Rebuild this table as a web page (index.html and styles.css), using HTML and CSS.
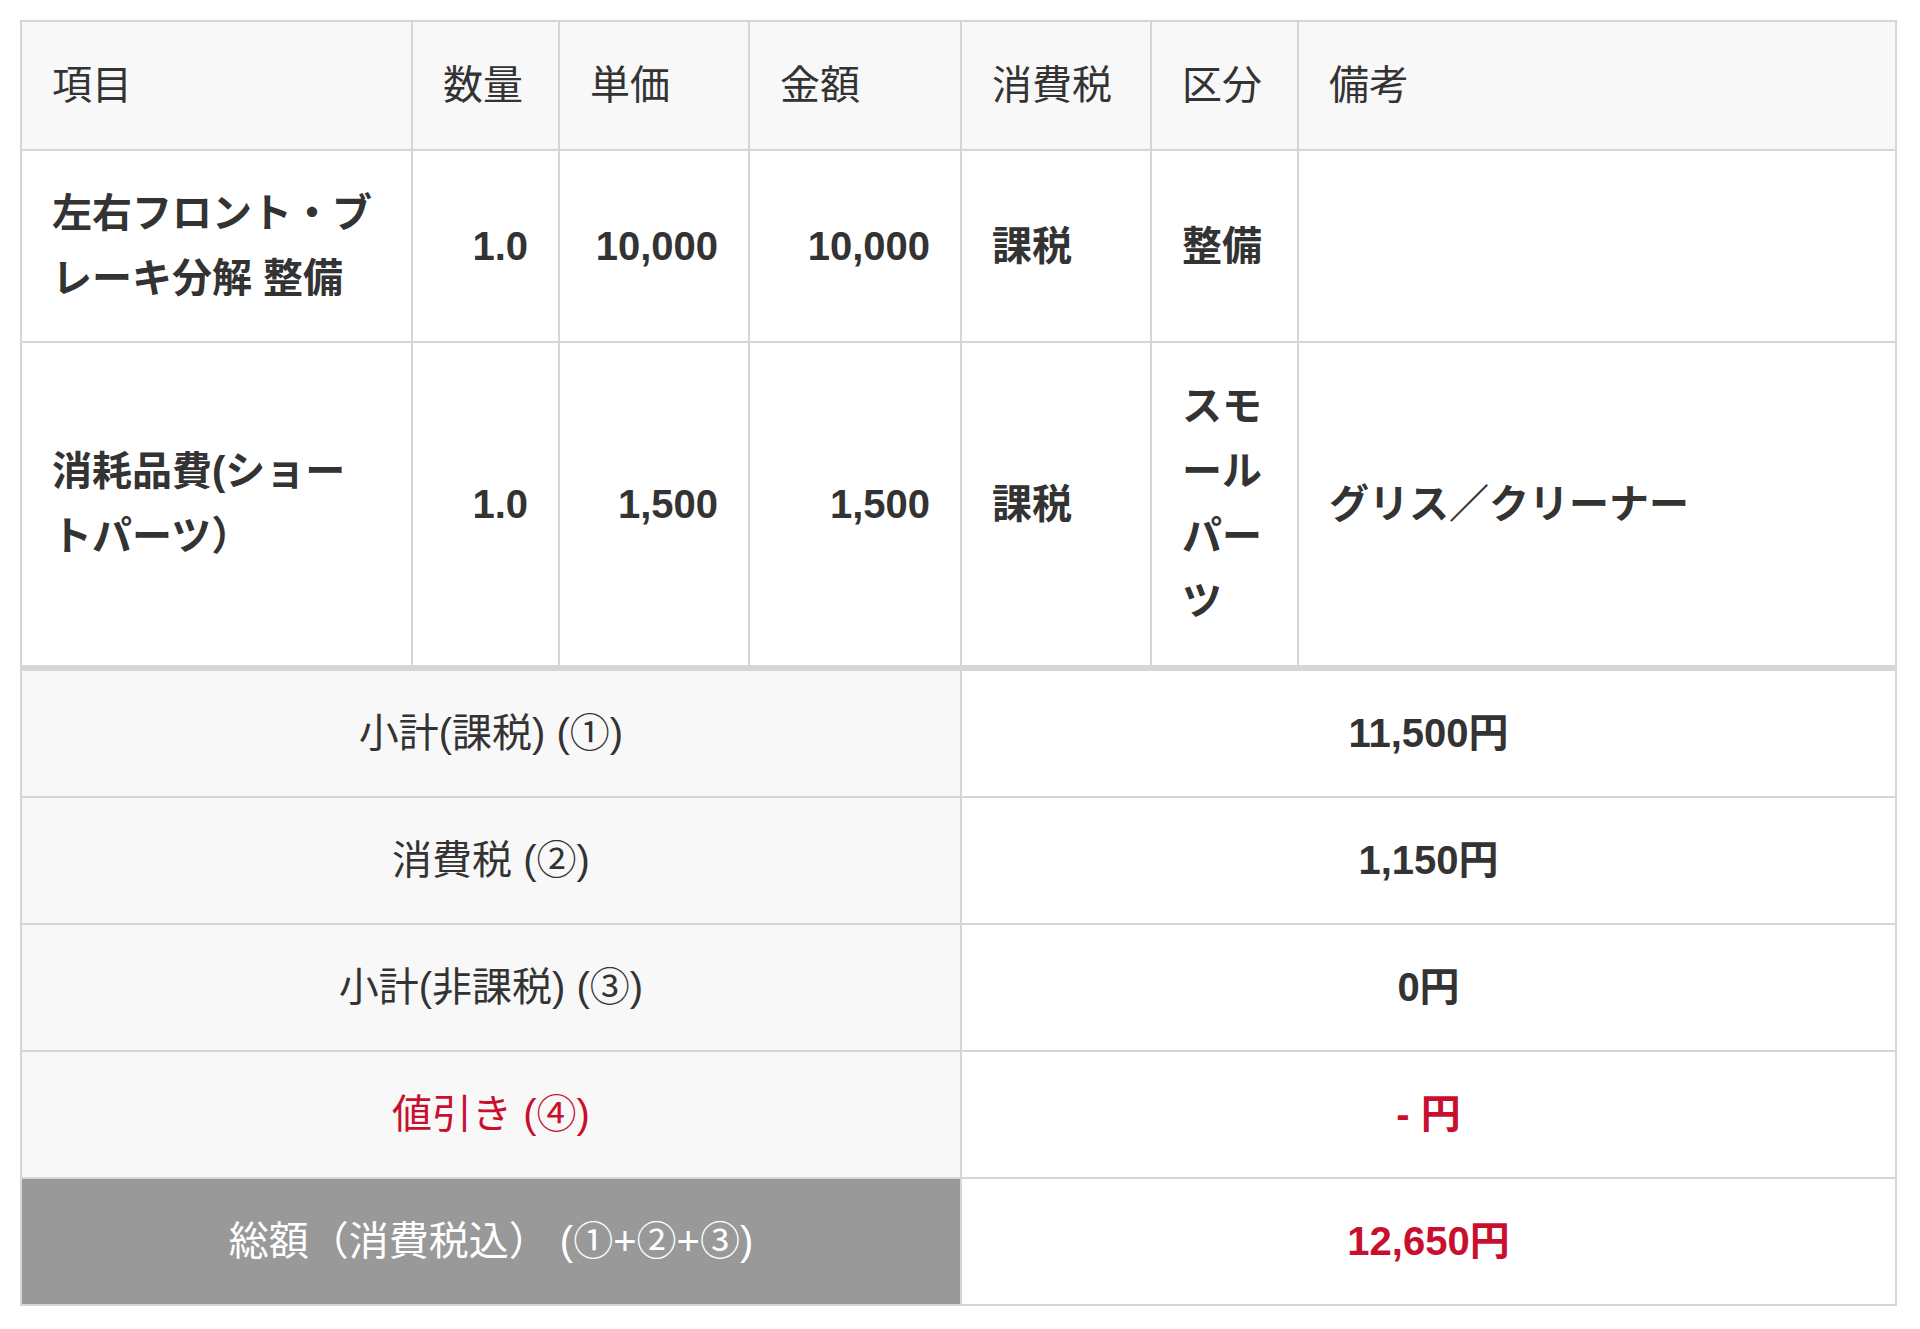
FILE: index.html
```html
<!DOCTYPE html>
<html lang="ja">
<head>
<meta charset="utf-8">
<title>見積明細</title>
<link rel="stylesheet" href="styles.css">
</head>
<body>
<div class="wrap">
  <table class="items">
    <colgroup>
      <col class="c-item"><col class="c-qty"><col class="c-unit"><col class="c-amount"><col class="c-tax"><col class="c-kind"><col class="c-note">
    </colgroup>
    <thead>
      <tr>
        <th>項目</th>
        <th>数量</th>
        <th>単価</th>
        <th>金額</th>
        <th>消費税</th>
        <th>区分</th>
        <th>備考</th>
      </tr>
    </thead>
    <tbody>
      <tr class="row-short">
        <td>左右フロント・ブレーキ分解 整備</td>
        <td class="num">1.0</td>
        <td class="num">10,000</td>
        <td class="num">10,000</td>
        <td>課税</td>
        <td class="kind">整備</td>
        <td></td>
      </tr>
      <tr>
        <td>消耗品費(ショートパーツ）</td>
        <td class="num">1.0</td>
        <td class="num">1,500</td>
        <td class="num">1,500</td>
        <td>課税</td>
        <td class="kind">スモールパーツ</td>
        <td>グリス／クリーナー</td>
      </tr>
    </tbody>
  </table>
  <table class="summary">
    <colgroup>
      <col class="s-label"><col class="s-value">
    </colgroup>
    <tbody>
      <tr>
        <th>小計(課税) (①)</th>
        <td>11,500円</td>
      </tr>
      <tr>
        <th>消費税 (②)</th>
        <td>1,150円</td>
      </tr>
      <tr>
        <th>小計(非課税) (③)</th>
        <td>0円</td>
      </tr>
      <tr class="discount">
        <th>値引き (④)</th>
        <td>- 円</td>
      </tr>
      <tr class="total">
        <th>総額（消費税込） (①+②+③)</th>
        <td>12,650円</td>
      </tr>
    </tbody>
  </table>
</div>
</body>
</html>
```

FILE: styles.css
```css
html, body {
  margin: 0;
  padding: 0;
  background: #ffffff;
}

body {
  font-family: "Liberation Sans", "Noto Sans CJK JP", sans-serif;
  color: #333333;
}

.wrap {
  padding: 20px 0 0 20px;
}

table {
  border-collapse: collapse;
  table-layout: fixed;
  width: 1875px;
}

th, td {
  border: 2px solid #d6d6d6;
  padding: 31px 30px;
  font-size: 40px;
  line-height: 65px;
  vertical-align: middle;
  text-align: left;
}

.items th {
  background: #f8f8f8;
  font-weight: 400;
}

.items td {
  background: #ffffff;
  font-weight: 700;
}

.items .row-short td {
  padding-top: 30px;
  padding-bottom: 30px;
}

.c-item { width: 391px; }
.c-qty { width: 147px; }
.c-unit { width: 190px; }
.c-amount { width: 212px; }
.c-tax { width: 190px; }
.c-kind { width: 147px; }
.c-note { width: 598px; }

.items td.num {
  text-align: right;
}

.items td.kind {
  line-break: anywhere;
}

.s-label { width: 940px; }
.s-value { width: 935px; }

.summary th,
.summary td {
  text-align: center;
  padding-top: 30px;
  padding-bottom: 30px;
}

.summary th {
  background: #f8f8f8;
  font-weight: 400;
}

.summary td {
  background: #ffffff;
  font-weight: 700;
}

.summary tr:first-child th,
.summary tr:first-child td {
  border-top-width: 4px;
}

.summary .discount th,
.summary .discount td,
.summary .total td {
  color: #c8102e;
}

.summary .total th {
  background: #999999;
  color: #ffffff;
}
```
